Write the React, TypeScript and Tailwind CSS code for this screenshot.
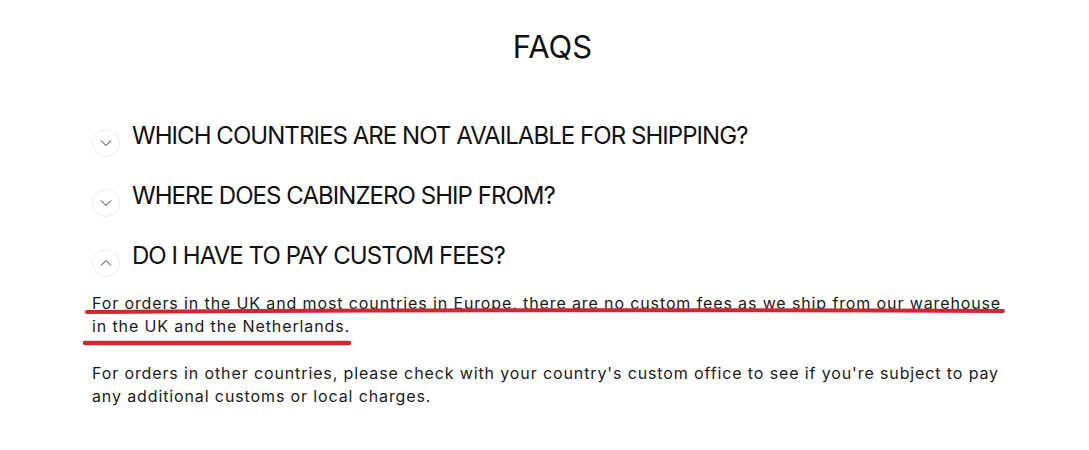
import React from "react";

function Chevron({ up }: { up?: boolean }) {
  return (
    <span className="flex h-[28px] w-[28px] shrink-0 items-center justify-center rounded-full border border-[#ececec] bg-white">
      <svg width="12" height="8" viewBox="0 0 12 8" fill="none">
        {up ? (
          <path d="M1 6.5 L6 1.5 L11 6.5" stroke="#333" strokeWidth="1" />
        ) : (
          <path d="M1 1.5 L6 6.5 L11 1.5" stroke="#333" strokeWidth="1" />
        )}
      </svg>
    </span>
  );
}

function Question({ text, up }: { text: string; up?: boolean }) {
  return (
    <div className="flex h-[60px] items-center gap-[12px]">
      <div className="pt-[14px]">
        <Chevron up={up} />
      </div>
      <h3 className="text-[24px] font-normal uppercase leading-none tracking-[-0.95px] text-[#111]">
        {text}
      </h3>
    </div>
  );
}

export default function App() {
  return (
    <div
      className="relative h-[450px] w-[1089px] overflow-hidden bg-white text-[#111]"
      style={{ fontFamily: "Inter, 'Noto Sans', sans-serif" }}
    >
      <h1 className="pl-[16px] pt-[30px] text-center text-[31px] font-normal leading-[34px] tracking-[0px]">
        FAQS
      </h1>
      <div className="pl-[92px] pt-[42px]">
        <Question text="Which countries are not available for shipping?" />
        <Question text="Where does CabinZero ship from?" />
        <Question text="Do I have to pay custom fees?" up />
        <div className="w-[918px] pt-[6px] text-[16px] leading-[23px] tracking-[0.88px] text-[#1a1a1a]">
          <p>
            For orders in the UK and most countries in Europe, there are no custom fees as we ship from our warehouse in the UK and the Netherlands.
          </p>
          <p className="mt-[24px]">
            For orders in other countries, please check with your country's custom office to see if you're subject to pay any additional customs or local charges.
          </p>
        </div>
      </div>
      <svg
        className="pointer-events-none absolute left-0 top-0"
        width="1089"
        height="450"
        viewBox="0 0 1089 450"
      >
        <path d="M87 312 Q 540 309 1003 311" stroke="#d1262f" strokeWidth="4" strokeLinecap="round" fill="none" />
        <path d="M85 343 L 349 343" stroke="#d1262f" strokeWidth="4.5" strokeLinecap="round" fill="none" />
      </svg>
    </div>
  );
}
